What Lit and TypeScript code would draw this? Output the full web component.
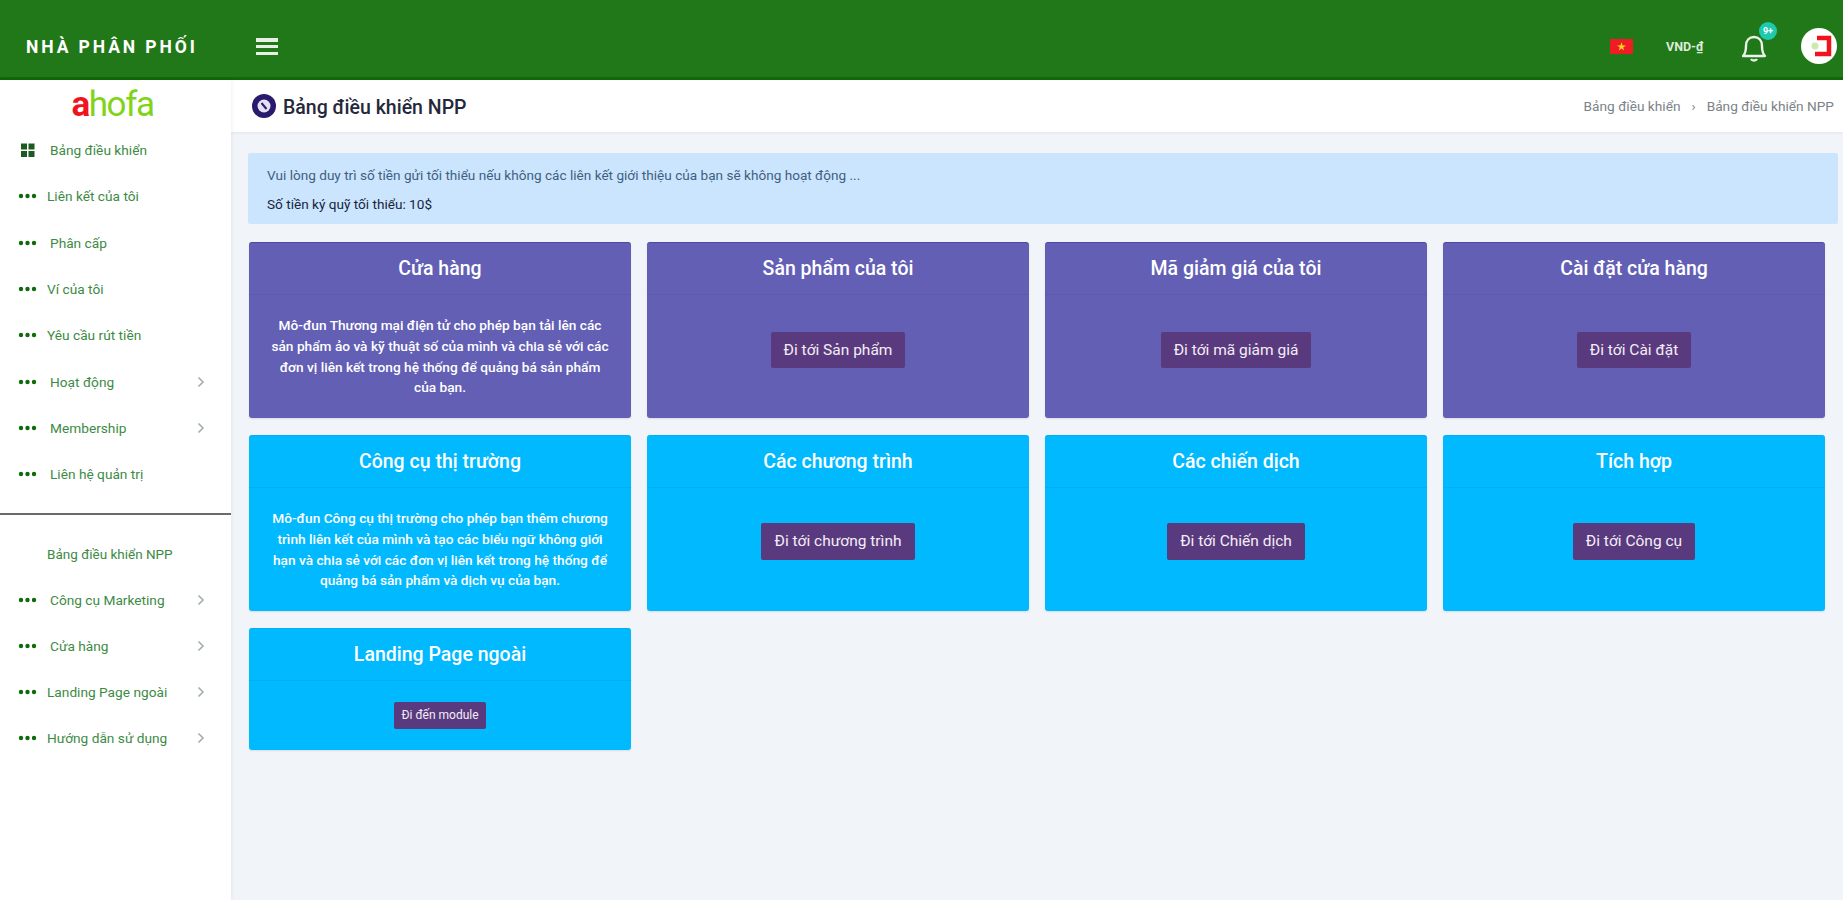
import { LitElement, html, css, svg } from "lit";
import { customElement } from "lit/decorators.js";

const dots = svg`<svg width="19" height="6" viewBox="0 0 19 6"><circle cx="3" cy="3" r="2.2" fill="#0f6a0c"/><circle cx="9.5" cy="3" r="2.2" fill="#0f6a0c"/><circle cx="16" cy="3" r="2.2" fill="#0f6a0c"/></svg>`;
const grid = svg`<svg width="19" height="15" viewBox="0 0 19 15"><g fill="#1c5a22"><rect x="3" y="0.5" width="6" height="6"/><rect x="10.5" y="0.5" width="6" height="6"/><rect x="3" y="8" width="6" height="6"/><rect x="10.5" y="8" width="6" height="6"/></g></svg>`;
const chev = svg`<svg class="chev" width="8" height="12" viewBox="0 0 8 12"><path d="M1.5 1.5 6 6l-4.5 4.5" fill="none" stroke="#a3aea3" stroke-width="1.6"/></svg>`;

type Item = { t: string; arrow?: boolean; narrow?: boolean; first?: boolean };
const top: Item[] = [
  { t: "Bảng điều khiển", first: true },
  { t: "Liên kết của tôi", narrow: true },
  { t: "Phân cấp" },
  { t: "Ví của tôi", narrow: true },
  { t: "Yêu cầu rút tiền", narrow: true },
  { t: "Hoạt động", arrow: true },
  { t: "Membership", arrow: true },
  { t: "Liên hệ quản trị" },
];
const bottom: Item[] = [
  { t: "Công cụ Marketing", arrow: true },
  { t: "Cửa hàng", arrow: true },
  { t: "Landing Page ngoài", arrow: true, narrow: true },
  { t: "Hướng dẫn sử dụng", arrow: true, narrow: true },
];

type Card = { title: string; desc?: string; btn?: string; blue?: boolean; small?: boolean };
const cards: Card[] = [
  { title: "Cửa hàng", desc: "Mô-đun Thương mại điện tử cho phép bạn tải lên các sản phẩm ảo và kỹ thuật số của mình và chia sẻ với các đơn vị liên kết trong hệ thống để quảng bá sản phẩm của bạn." },
  { title: "Sản phẩm của tôi", btn: "Đi tới Sản phẩm" },
  { title: "Mã giảm giá của tôi", btn: "Đi tới mã giảm giá" },
  { title: "Cài đặt cửa hàng", btn: "Đi tới Cài đặt" },
  { title: "Công cụ thị trường", blue: true, desc: "Mô-đun Công cụ thị trường cho phép bạn thêm chương trình liên kết của mình và tạo các biểu ngữ không giới hạn và chia sẻ với các đơn vị liên kết trong hệ thống để quảng bá sản phẩm và dịch vụ của bạn." },
  { title: "Các chương trình", blue: true, btn: "Đi tới chương trình" },
  { title: "Các chiến dịch", blue: true, btn: "Đi tới Chiến dịch" },
  { title: "Tích hợp", blue: true, btn: "Đi tới Công cụ" },
  { title: "Landing Page ngoài", blue: true, small: true, btn: "Đi đến module" },
];

@customElement("app-root")
export class AppRoot extends LitElement {
  static styles = css`
    :host {
      display: flex;
      flex-direction: column;
      height: 100vh;
      overflow: hidden;
      font-family: Roboto, "Noto Sans", sans-serif;
      background: #f1f5f9;
    }
    .top {
      flex: none;
      height: 80px;
      box-sizing: border-box;
      background: #217818;
      border-bottom: 3px solid #0f690b;
      display: flex;
      align-items: center;
      color: #fff;
      padding-top: 16px;
    }
    .brand {
      width: 256px;
      box-sizing: border-box;
      padding-left: 26px;
      font-weight: 700;
      font-size: 17.5px;
      letter-spacing: 2.9px;
      white-space: nowrap;
    }
    .burger {
      width: 22px;
      height: 17px;
      display: flex;
      flex-direction: column;
      justify-content: space-between;
    }
    .burger i {
      display: block;
      height: 3.5px;
      background: #e8f0e6;
    }
    .right {
      margin-left: auto;
      display: flex;
      align-items: center;
    }
    .flag {
      width: 23px;
      height: 15px;
      display: block;
      margin-right: 33px;
    }
    .cur {
      font-size: 12.5px;
      font-weight: 700;
      margin-right: 32px;
      width: 42px;
      white-space: nowrap;
      color: #dfeadc;
    }
    .bell {
      position: relative;
      width: 28px;
      height: 30px;
      margin-right: 33px;
    }
    .badge {
      position: absolute;
      top: -10px;
      right: -9px;
      width: 18px;
      height: 18px;
      border-radius: 50%;
      background: #1fc9b0;
      color: #fff;
      font-size: 9px;
      font-weight: 700;
      text-align: center;
      line-height: 18px;
    }
    .avatar {
      display: block;
      margin-right: 6px;
      margin-top: -2px;
    }
    .body {
      flex: 1;
      min-height: 0;
      display: flex;
    }
    .side {
      flex: none;
      width: 231px;
      box-sizing: border-box;
      background: #fff;
      box-shadow: 1px 0 4px rgba(0, 0, 0, 0.06);
      z-index: 1;
    }
    .logo {
      height: 47px;
      padding-top: 7px;
      box-sizing: border-box;
      text-align: center;
      font-size: 35px;
      line-height: 36px;
      letter-spacing: -1.4px;
      color: #7fd418;
      padding-right: 6px;
    }
    .logo b {
      font-weight: 700;
      color: #f0141e;
    }
    .menu {
      display: flex;
      flex-direction: column;
    }
    .item {
      height: 46.3px;
      display: flex;
      align-items: center;
      padding-left: 18px;
      font-size: 13.7px;
      color: #3d8a44;
      white-space: nowrap;
    }
    .item span {
      margin-left: 13px;
    }
    .item span.narrow {
      margin-left: 10px;
    }
    .chev {
      margin-left: auto;
      margin-right: 26px;
    }
    .rule {
      height: 2px;
      background: #6a6a6a;
      margin-top: 16px;
    }
    .sect {
      font-size: 13.5px;
      color: #3d8a44;
      padding: 31px 0 14px 47px;
      line-height: 16px;
    }
    .main {
      flex: 1;
      min-width: 0;
      display: flex;
      flex-direction: column;
    }
    .bar {
      flex: none;
      height: 52px;
      background: #fff;
      box-shadow: 0 1px 3px rgba(0, 0, 0, 0.07);
      display: flex;
      align-items: center;
      padding: 0 9px 0 21px;
      box-sizing: border-box;
    }
    .bar h1 {
      margin: 2px 0 0 7px;
      font-size: 19.5px;
      font-weight: 500;
      color: #24283a;
    }
    .crumb {
      margin-left: auto;
      font-size: 13.7px;
      color: #7c8289;
      display: flex;
      gap: 11px;
    }
    .content {
      padding: 21px 5px 0 17px;
    }
    .alert {
      background: #cce5ff;
      height: 71px;
      box-sizing: border-box;
      padding: 14px 19px;
      font-size: 13.6px;
      color: #3f5f80;
      border-radius: 2px;
    }
    .alert p {
      margin: 0;
      line-height: 16px;
    }
    .alert p + p {
      margin-top: 13px;
      color: #16263a;
    }
    .cards {
      margin: 18px 13px 0 1px;
      display: grid;
      grid-template-columns: repeat(4, 1fr);
      grid-auto-rows: auto;
      column-gap: 16px;
      row-gap: 17px;
    }
    .card {
      background: #625fb5;
      color: #fff;
      border-radius: 3px;
      height: 176px;
      display: flex;
      flex-direction: column;
      box-shadow: 0 1px 2px rgba(0, 0, 0, 0.1);
      border-top: 1px solid #5048a8;
      box-sizing: border-box;
    }
    .card.blue {
      background: #00b9ff;
      border-top-color: #00b0f2;
    }
    .card.small {
      height: 122px;
    }
    .card h2 {
      flex: none;
      margin: 0;
      height: 52px;
      box-sizing: border-box;
      border-bottom: 1px solid rgba(0, 0, 0, 0.05);
      font-size: 19.5px;
      font-weight: 500;
      line-height: 52px;
      text-align: center;
    }
    .card .cb {
      flex: 1;
      display: flex;
      align-items: center;
      justify-content: center;
      padding: 0 19px;
    }
    .card p {
      margin: 0;
      font-size: 13.7px;
      font-weight: 500;
      line-height: 20.7px;
      text-align: center;
    }
    .btn {
      background: #5a3a7e;
      color: #f3eef6;
      font-size: 15.5px;
      padding: 0 13px;
      height: 36px;
      line-height: 36px;
      border-radius: 2px;
      margin-top: -13px;
      white-space: nowrap;
    }
    .blue .btn {
      margin-top: -17px;
      height: 37px;
      line-height: 37px;
    }
    .small .btn {
      margin-top: 0;
      height: 27px;
      line-height: 27px;
      font-size: 12px;
      padding: 0 7px;
    }
  `;

  private row(i: Item) {
    return html`<div class="item">
      ${i.first ? grid : dots}
      <span class=${i.narrow ? "narrow" : ""}>${i.t}</span>
      ${i.arrow ? chev : ""}
    </div>`;
  }

  render() {
    return html`
      <header class="top">
        <div class="brand">NHÀ PHÂN PHỐI</div>
        <div class="burger"><i></i><i></i><i></i></div>
        <div class="right">
          <svg class="flag" viewBox="0 0 23 15">
            <rect width="23" height="15" fill="#ee1c25" />
            <path d="M11.5 3.2l1.1 3.2h3.3l-2.7 2 1 3.2-2.7-2-2.7 2 1-3.2-2.7-2h3.3z" fill="#ffd21f" />
          </svg>
          <div class="cur">VND-₫</div>
          <div class="bell">
            <svg width="28" height="30" viewBox="0 0 28 30" fill="none" stroke="#eaf3e8" stroke-width="2.4">
              <path d="M3 24c2-2 3-4 3-10 0-6 3.500-9 8-9s8 3 8 9c0 6 1 8 3 10z" stroke-linejoin="round" />
              <path d="M11 27c1 2 5 2 6 0" />
            </svg>
            <div class="badge">9+</div>
          </div>
          <svg class="avatar" width="36" height="36" viewBox="0 0 36 36">
            <circle cx="18" cy="18" r="18" fill="#fff" />
            <path d="M16 10h12v16H14" fill="none" stroke="#f0141e" stroke-width="4.500" />
            <circle cx="14" cy="18" r="3.500" fill="#cbe8ad" />
          </svg>
        </div>
      </header>
      <div class="body">
        <aside class="side">
          <div class="logo"><b>a</b>hofa</div>
          <nav class="menu">${top.map((i) => this.row(i))}</nav>
          <div class="rule"></div>
          <div class="sect">Bảng điều khiển NPP</div>
          <nav class="menu">${bottom.map((i) => this.row(i))}</nav>
        </aside>
        <main class="main">
          <div class="bar">
            <svg width="24" height="24" viewBox="0 0 24 24">
              <circle cx="12" cy="12" r="12" fill="#2a1a6e" />
              <circle cx="12" cy="12" r="6.5" fill="#e4e2f2" />
              <path d="M9.5 9l5 6" stroke="#2a1a6e" stroke-width="2" />
            </svg>
            <h1>Bảng điều khiển NPP</h1>
            <div class="crumb">
              <span>Bảng điều khiển</span><span>›</span><span>Bảng điều khiển NPP</span>
            </div>
          </div>
          <div class="content">
            <div class="alert">
              <p>Vui lòng duy trì số tiền gửi tối thiểu nếu không các liên kết giới thiệu của bạn sẽ không hoạt động ...</p>
              <p>Số tiền ký quỹ tối thiểu: 10$</p>
            </div>
            <div class="cards">
              ${cards.map(
                (c) => html`<section class="card ${c.blue ? "blue" : ""} ${c.small ? "small" : ""}">
                  <h2>${c.title}</h2>
                  <div class="cb">
                    ${c.desc ? html`<p>${c.desc}</p>` : html`<div class="btn">${c.btn}</div>`}
                  </div>
                </section>`
              )}
            </div>
          </div>
        </main>
      </div>
    `;
  }
}
